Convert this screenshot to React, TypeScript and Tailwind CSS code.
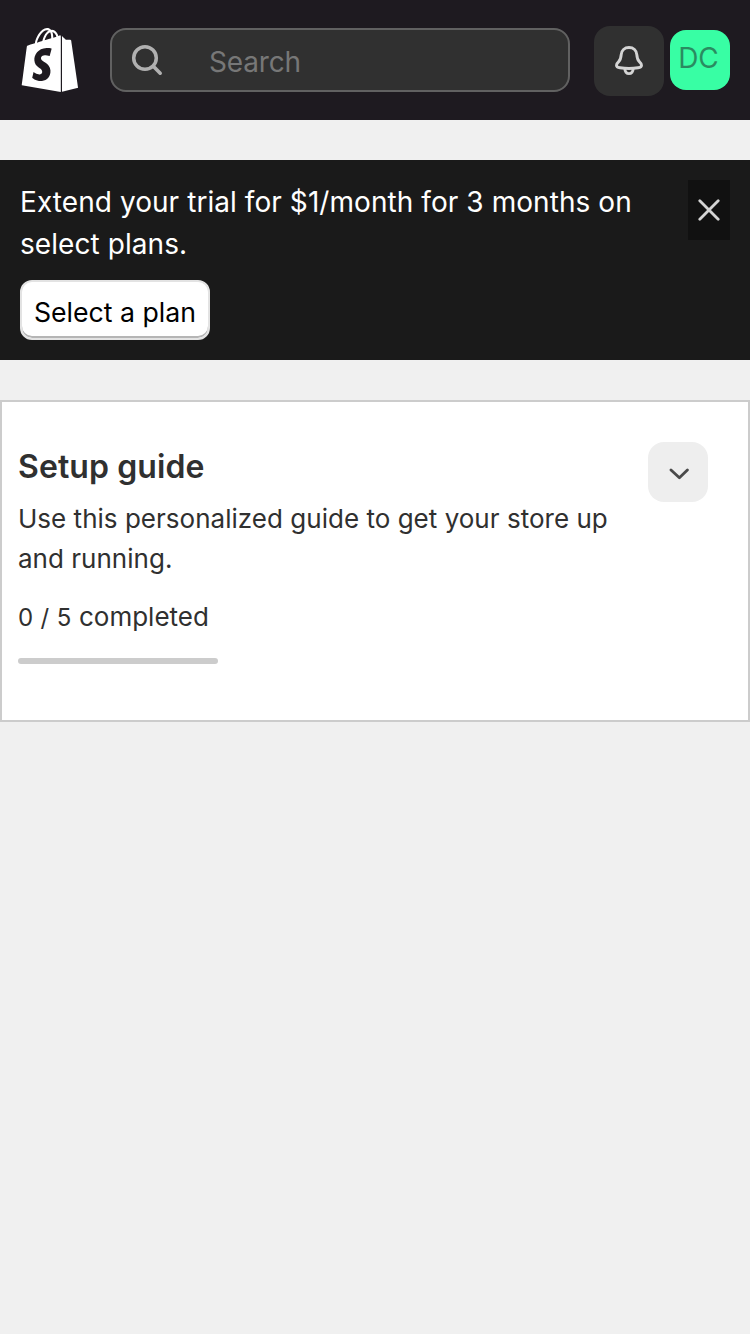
import { FaShopify } from "react-icons/fa";

function SearchIcon() {
  return (
    <svg width="32" height="32" viewBox="0 0 32 32" fill="none" stroke="#b0b0b0" strokeLinecap="round">
      <circle cx="14" cy="14" r="11.3" strokeWidth="3.5" />
      <path d="M22.3 22.3 29.2 29.2" strokeWidth="3.6" />
    </svg>
  );
}

function BellIcon() {
  return (
    <svg width="30" height="30" viewBox="0 0 30 30" fill="none" stroke="#d4d4d4" strokeWidth="2.9" strokeLinejoin="round">
      <path d="M15 1.500C10.500 1.500 7.500 4.600 7.200 8.600C6.900 12.600 6.500 14.100 4.500 15.900C3.400 16.900 2.500 17.800 2.500 19.200C2.500 20.800 4 21.500 6 21.800C11.800 22.800 18.200 22.800 24 21.800C26 21.500 27.500 20.800 27.500 19.200C27.500 17.800 26.600 16.900 25.500 15.900C23.500 14.100 23.100 12.600 22.800 8.600C22.500 4.600 19.500 1.500 15 1.500Z" />
      <path d="M10.900 22.800C10.900 25.600 12.500 27.600 15 27.600S19.100 25.600 19.100 22.800" />
    </svg>
  );
}

export default function App() {
  return (
    <div className="flex min-h-screen w-full flex-col bg-[#f0f0f0] font-['Inter',sans-serif] text-[#303030]">
      <header className="flex h-[120px] bg-[#1e1a20] pl-[21px] pr-5">
        <FaShopify className="mt-[27px] h-[66px] w-[58px] text-white" />
        <div className="ml-[31px] mt-7 flex h-16 w-[460px] items-center rounded-2xl border-2 border-[#616161] bg-[#303030] pl-[19px]">
          <SearchIcon />
          <span className="ml-[46px] mt-[3px] text-[28px] leading-8 tracking-[-0.15px] text-[#777777]">Search</span>
        </div>
        <button className="ml-6 mt-[26px] flex size-[70px] items-center justify-center rounded-2xl bg-[#303030]">
          <BellIcon />
        </button>
        <div className="ml-1.5 mt-[30px] flex size-[60px] justify-center rounded-2xl bg-[#38fea4] pr-[3px]">
          <span className="mt-2 text-[28px] leading-10 text-[#1e1a20] opacity-50">DC</span>
        </div>
      </header>

      <section className="mt-10 flex h-[200px] items-start justify-between bg-[#1a1a1a] p-5">
        <div>
          <p className="w-[640px] pt-px text-[28px] leading-[42px] tracking-[0.065px] text-white">
            Extend your trial for $1/month for 3 months on select plans.
          </p>
          <button className="mt-[15px] flex h-[60px] w-[190px] items-center justify-center rounded-xl border-2 border-[#e3e3e3] bg-white pt-1 text-[26.67px] text-black shadow-[inset_0_-2px_0_#b5b5b5]">
            Select a plan
          </button>
        </div>
        <button className="flex h-[60px] w-[42px] items-center justify-center bg-[#111111]">
          <svg width="22" height="22" viewBox="0 0 22 22" fill="none" stroke="#d4d4d4" strokeWidth="2.8" strokeLinecap="round">
            <path d="M1.800 1.800 20.200 20.200M20.200 1.800 1.800 20.200" />
          </svg>
        </button>
      </section>

      <section className="mt-10 flex h-[322px] items-start justify-between border-2 border-[#cccccc] bg-white pl-4 pr-10 pt-10">
        <div>
          <h2 className="mt-1 text-[32px] font-semibold leading-[42px] tracking-[0.1px]">Setup guide</h2>
          <p className="mt-[11px] w-[620px] text-[26px] leading-10 tracking-[0.02px]">
            Use this personalized guide to get your store up and running.
          </p>
          <p className="mt-[18px] text-[26px] leading-10">
            <span className="text-[24px] tracking-[0.35px]">0 / 5</span> completed
          </p>
          <div className="mt-5 h-1.5 w-[200px] rounded-full bg-[#cccccc]" />
        </div>
        <button className="flex size-[60px] items-center justify-center rounded-2xl bg-[#eeeeee]">
          <svg className="ml-0.5 mt-[3px]" width="20" height="12" viewBox="0 0 20 12" fill="none" stroke="#4a4a4a" strokeWidth="2.8" strokeLinecap="round" strokeLinejoin="round">
            <path d="M2 2 10.400 9.800 18.400 2" />
          </svg>
        </button>
      </section>
    </div>
  );
}
